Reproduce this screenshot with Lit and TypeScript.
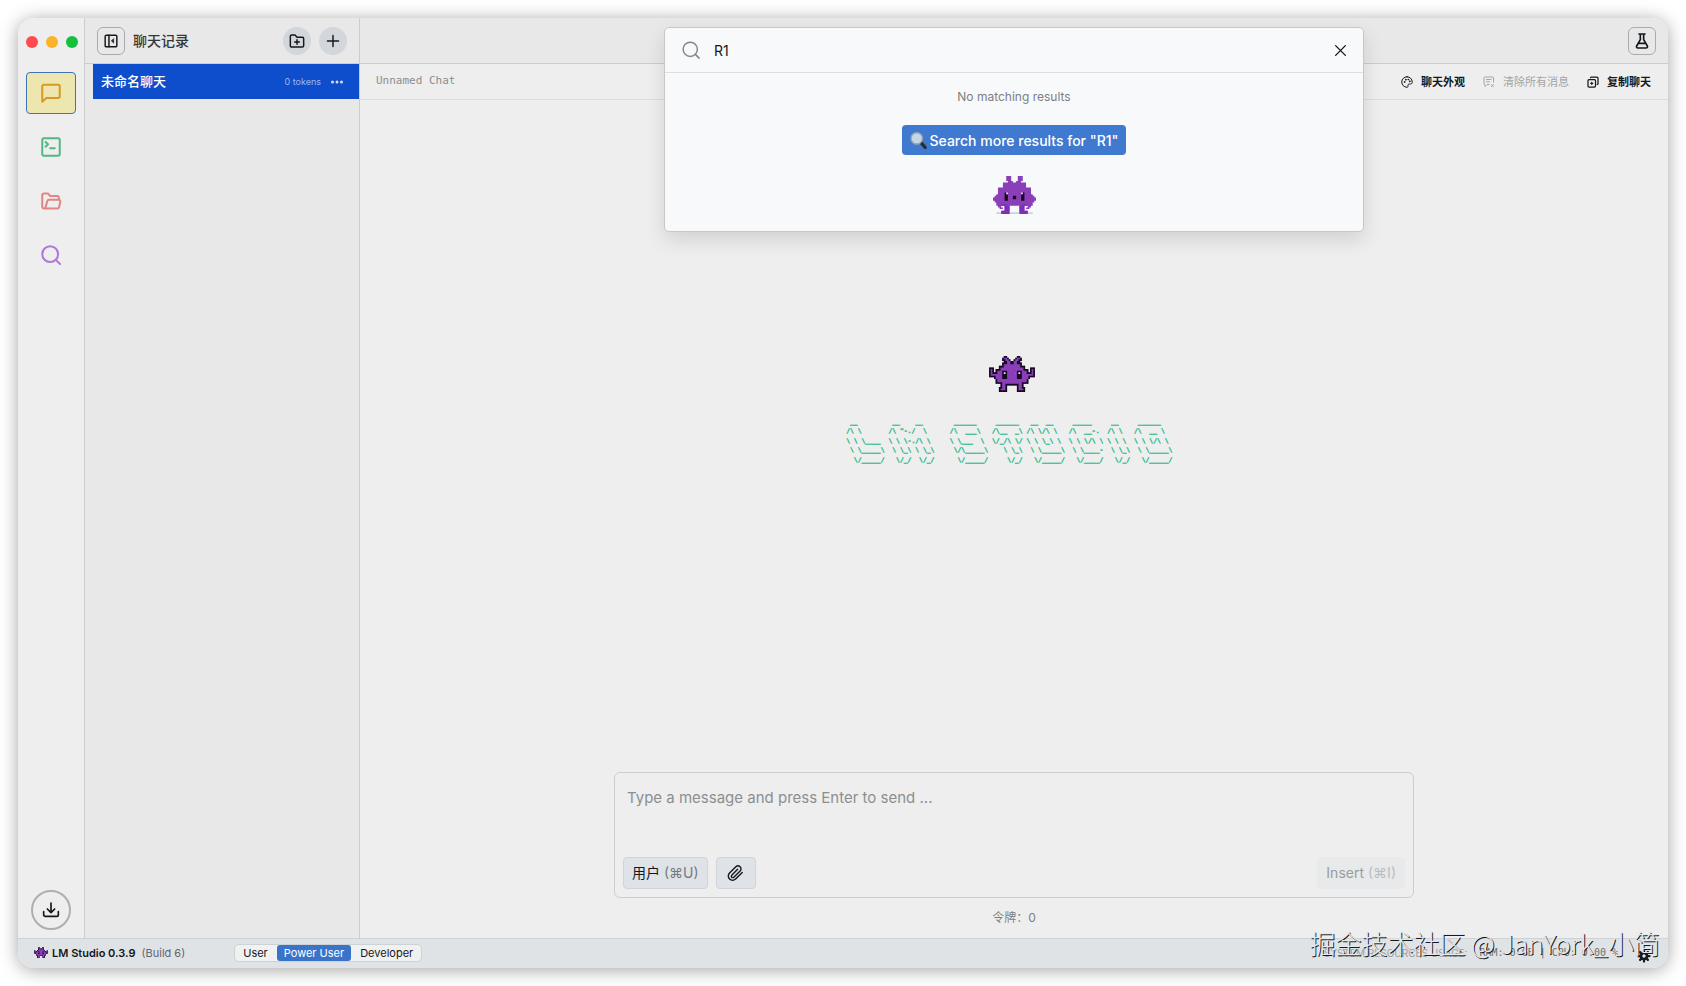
import { LitElement, html, css, svg } from "lit";
import { customElement, property, state } from "lit/decorators.js";
import { classMap } from "lit/directives/class-map.js";

const WORDMARK = [
  ' __         __    __        ______     ______   __  __     _____     __     ______',
  '/\\ \\       /\\ "-./  \\      /\\  ___\\   /\\__  _\\ /\\ \\/\\ \\   /\\  __-.  /\\ \\   /\\  __ \\',
  '\\ \\ \\____  \\ \\ \\-./\\ \\     \\ \\___  \\  \\/_/\\ \\/ \\ \\ \\_\\ \\  \\ \\ \\/\\ \\ \\ \\ \\  \\ \\ \\/\\ \\',
  ' \\ \\_____\\  \\ \\_\\ \\ \\_\\     \\/\\_____\\    \\ \\_\\  \\ \\_____\\  \\ \\____-  \\ \\_\\  \\ \\_____\\',
  '  \\/_____/   \\/_/  \\/_/      \\/_____/     \\/_/   \\/_____/   \\/____/   \\/_/   \\/_____/',
];

// Left halves of the sprites; each row is mirrored when drawn.
const OUTLINED = [
  ".........##...",
  "........#pp#..",
  "........##pp#.",
  ".........##pp#",
  "........###pp#",
  "........#ppppp",
  "......###ppppp",
  "###...#ppppppp",
  "#p#.###ppppppp",
  "#p#.#ppp###ppp",
  "#p###ppp#w#ppp",
  "#ppppppp###ppp",
  "####pppp###ppp",
  "...#pppp###ppp",
  "....#ppppppppp",
  "....#ppppppppp",
  "....####pppppp",
  ".......#pp####",
  ".......#pp#...",
  "......##pp#...",
  "......#ppp#...",
  "......#####...",
];

const PLAIN = [
  "........ppp..",
  "........ppp..",
  "........ppp..",
  ".........ppp.",
  "......ppppppp",
  "......ppppppp",
  "......ppppppp",
  "...pppppppppp",
  "...pppppppppp",
  "...pppppppppp",
  "...pppp#wpppp",
  "..ppppp##pppp",
  ".pppppp##ppp#",
  "ppppppp##ppp#",
  "ppppppp##pppp",
  ".pppppppppppp",
  "..ppppppppppp",
  "..pppqqqppppp",
  "...pp..qqq...",
  "....pp.qqq...",
  ".......qqq...",
  ".....qqqqq...",
  "..sssqqqqqsss",
];

const PALETTE: Record<string, string> = {
  "#": "#160a22",
  p: "#8a3fb8",
  q: "#7a2fb4",
  w: "#e9dcf5",
  s: "#cdd2da",
};

@customElement("pixel-mascot")
class PixelMascot extends LitElement {
  @property() variant: "outlined" | "plain" = "outlined";
  static styles = css`
    :host { display: block; }
    svg { display: block; width: 100%; height: 100%; }
  `;
  render() {
    const half = this.variant === "plain" ? PLAIN : OUTLINED;
    const rows = half.map((r) => r + [...r].reverse().join(""));
    // One path per colour, so that neighbouring cells leave no seam.
    const cells = (key: string) =>
      rows.map((row, y) => [...row].map((c, x) => (c === key ? `M${x} ${y}h1v1h-1z` : "")).join("")).join("");
    const body = rows
      .map((row, y) => [...row].map((c, x) => ("#pqw".includes(c) ? `M${x} ${y}h1v1h-1z` : "")).join(""))
      .join("");
    return html`<svg viewBox="0 0 ${rows[0].length} ${rows.length}" aria-hidden="true">
      <path d=${body} fill=${PALETTE.p}></path>
      ${["s", "q", "#", "w"].map((k) => svg`<path d=${cells(k)} fill=${PALETTE[k]}></path>`)}
    </svg>`;
  }
}

const ICONS: Record<string, unknown> = {
  chat: svg`<path d="M22.500 16a2 2 0 0 1-2 2H6.500L1.500 22.500V4a2 2 0 0 1 2-2H20.500a2 2 0 0 1 2 2z"/>`,
  terminal: svg`<rect x="1.500" y="1.500" width="21" height="21" rx="2"/><path d="M5.500 6l3 2.800-3 2.800M11 13.500h5.500"/>`,
  folder: svg`<path d="M5 21l2.600-9a2 2 0 0 1 1.900-1.400H21.500a1.700 1.700 0 0 1 1.700 2.100l-1.500 6.700A2 2 0 0 1 19.700 21H3.500a2 2 0 0 1-2-2V5a2 2 0 0 1 2-2h4.200a2 2 0 0 1 1.700.9l.9 1.300a2 2 0 0 0 1.700.9h7.500a2 2 0 0 1 2 2v2.400"/>`,
  search: svg`<circle cx="11" cy="11" r="9.500"/><path d="M17.800 17.800L22.800 22.800"/>`,
  panel: svg`<rect x="2" y="2" width="20" height="20" rx="2"/><path d="M8.500 2v20"/><path d="M16.500 8.500v7L12.800 12z" fill="currentColor" stroke-width="1"/>`,
  folderPlus: svg`<path d="M2 5a2 2 0 0 1 2-2h5l3 3.500h8a2 2 0 0 1 2 2V19a2 2 0 0 1-2 2H4a2 2 0 0 1-2-2z"/><path d="M12 10v7M8.500 13.500h7"/>`,
  plus: svg`<path d="M12 2.500v19M2.500 12h19"/>`,
  close: svg`<path d="M3 3l18 18M21 3L3 21"/>`,
  flask: svg`<path d="M7.500 1.500h9M9.500 1.500v8.500L4 19.500a2 2 0 0 0 1.800 3h12.400a2 2 0 0 0 1.800-3L14.500 10V1.500M7 15.500h10"/>`,
  palette: svg`<path d="M12 1.500C6 1.500 1.500 6.300 1.500 12S6 22.500 12 22.500c1.800 0 2.400-1.200 2-2.700-.5-2.300.3-3.800 2.800-3.800H19c2 0 3.500-1.500 3.500-4C22.500 6.300 18 1.500 12 1.500z"/><circle cx="7" cy="12" r=".8"/><circle cx="9.500" cy="7.500" r=".8"/><circle cx="14.500" cy="7" r=".8"/><circle cx="17.500" cy="10.500" r=".8"/>`,
  clear: svg`<path d="M12 17H8l-4 4v-4a2 2 0 0 1-2-2V4a2 2 0 0 1 2-2h15a2 2 0 0 1 2 2v8M7 7h9M7 11.500h6M16.500 17l4.500 4.500M21 17l-4.500 4.500"/>`,
  copy: svg`<rect x="2" y="7" width="15" height="15" rx="2"/><path d="M7 3.500A2 2 0 0 1 8.500 2H20a2 2 0 0 1 2 2v11.500a2 2 0 0 1-1.500 1.500M9.500 12.500v4M7.500 14.500h4"/>`,
  clip: svg`<path d="M21.500 10.500l-9.400 9.400a6 6 0 0 1-8.500-8.500l8.900-8.900a4 4 0 0 1 6 6l-8.900 8.700a2 2 0 0 1-2.900-2.900l8.300-8.200"/>`,
  download: svg`<path d="M12 1.500v14M6.500 10.500l5.500 5.500 5.500-5.500M1 14.500V19a2.500 2.500 0 0 0 2.500 2.500h17a2.500 2.500 0 0 0 2.500-2.500v-4.500"/>`,
  dots: svg`<g fill="currentColor" stroke="none"><circle cx="3" cy="12" r="3"/><circle cx="12" cy="12" r="3"/><circle cx="21" cy="12" r="3"/></g>`,
  gear: svg`<circle cx="12" cy="12" r="6" stroke-width="5"/><path stroke-width="4.500" d="M12 1v4M12 19v4M1 12h4M19 12h4M4.200 4.200L7 7M17 17l2.800 2.800M4.200 19.800L7 17M17 7l2.800-2.800"/>`,
  lens: svg`<path d="M15.500 15l6 7" stroke="#2b2b2f" stroke-width="4.500"/><circle cx="9.500" cy="9" r="8" fill="#c3d6ea" stroke="#9aa3ae" stroke-width="2"/>`,
};

@customElement("ui-icon")
class UiIcon extends LitElement {
  @property() name = "";
  @property({ type: Number }) weight = 2;
  static styles = css`
    :host { display: block; flex: none; width: 16px; height: 16px; }
    svg { display: block; width: 100%; height: 100%; overflow: visible; }
  `;
  render() {
    return html`<svg viewBox="0 0 24 24" fill="none" stroke="currentColor" stroke-width=${this.weight}
      stroke-linecap="round" stroke-linejoin="round" aria-hidden="true">${ICONS[this.name]}</svg>`;
  }
}

@customElement("app-root")
class AppRoot extends LitElement {
  @state() private mode = "Power User";
  @state() private section = "chat";
  @state() private searching = true;

  static styles = css`
    :host {
      display: block;
      font-family: Inter, "Noto Sans CJK SC", sans-serif;
      font-size: 14px;
      color: #14181c;
      background: #fff;
    }
    *, *::before, *::after { box-sizing: border-box; }
    button, input, textarea { font: inherit; color: inherit; margin: 0; padding: 0; border: 0; background: none; outline: 0; }
    button { display: flex; align-items: center; justify-content: center; cursor: pointer; white-space: nowrap; }
    .desktop { display: flex; height: 100vh; padding: 18px; }
    .window {
      position: relative; flex: 1; min-width: 0; display: flex; flex-direction: column;
      border-radius: 16px; overflow: hidden; background: #eee;
    }
    .shade { flex: 1; min-width: 0; display: flex; border-radius: 16px; box-shadow: 0 2px 18px rgba(0, 0, 0, 0.36); }
    .body { flex: 1; min-height: 0; display: flex; }

    .rail { width: 67px; flex: none; display: flex; flex-direction: column; align-items: center; border-right: 1px solid #cbcccd; padding-bottom: 8px; }
    .lights { display: flex; gap: 8px; padding: 18px 0 0 2px; height: 54px; }
    .light { width: 12px; height: 12px; border-radius: 50%; }
    .red { background: #ff4b50; } .amber { background: #fdb22b; } .green { background: #16bf3e; }
    .nav { display: flex; flex-direction: column; gap: 12px; flex: 1; }
    .nav button { width: 50px; height: 42px; border: 1px solid transparent; border-radius: 4px; }
    .nav button.active { background: #ede6ae; border-color: #3f73b8; }
    .nav ui-icon { width: 20px; height: 20px; }
    .c-chat { color: #d69a25; } .c-terminal { color: #52b883; } .c-folder { color: #e38486; } .c-search { color: #ae76dc; }
    .download { width: 40px; height: 40px; border: 2px solid #adaeaf; border-radius: 50%; }
    .download ui-icon { width: 16px; height: 16px; }

    .sidebar { width: 275px; flex: none; background: #e8e8e8; border-right: 1px solid #cbcccd; }
    .head { height: 46px; display: flex; align-items: center; border-bottom: 1px solid #cbcccd; background: #e8e8e8; }
    .sidebar .head { padding: 0 12px; gap: 8px; }
    .square { width: 28px; height: 28px; border: 1px solid #a9abad; border-radius: 6px; flex: none; }
    .square ui-icon { width: 14px; height: 14px; }
    .title { flex: 1; margin: 0; font-size: 14px; line-height: 20px; font-weight: 500; color: #33373b; }
    .round { width: 28px; height: 28px; border-radius: 50%; background: #d3d6da; flex: none; }
    .round ui-icon { width: 16px; height: 16px; }
    .round.add ui-icon { width: 14px; height: 14px; }
    .chat { height: 35px; margin-left: 8px; padding: 0 16px 0 8px; display: flex; align-items: center; gap: 10px; background: #0e4dcc; color: #fff; }
    .name { flex: 1; font-size: 13px; line-height: 20px; font-weight: 500; padding-bottom: 2px; }
    .tokens { font-size: 9px; line-height: 12px; color: #9fb8ec; }
    .chat ui-icon { width: 12px; height: 12px; color: #d5e0f7; }

    .main { flex: 1; min-width: 0; display: flex; flex-direction: column; }
    .main .head { justify-content: flex-end; padding: 0 12px; }
    .main .head ui-icon { width: 16px; height: 16px; }
    .bar { height: 36px; flex: none; display: flex; align-items: center; justify-content: space-between; padding: 0 17px 0 16px; border-bottom: 1px solid #dcdddd; }
    .crumb { font: 11px/16px "DejaVu Sans Mono", monospace; color: #8b8d8f; padding-bottom: 2px; }
    .tools { display: flex; gap: 18px; }
    .tools button { gap: 8px; font-size: 11px; line-height: 16px; font-weight: 700; }
    .tools button:disabled { color: #a3a5a7; font-weight: 400; cursor: default; }
    .tools ui-icon { width: 12px; height: 12px; }

    .canvas { flex: 1; min-height: 0; display: flex; flex-direction: column; align-items: center; justify-content: center; padding-bottom: 48px; }
    .hero { width: 46px; height: 36px; margin-right: 5px; }
    .wordmark { width: 328px; height: 48px; margin-top: 29px; margin-right: 9px; overflow: visible; }
    .wordmark text { font: bold 10px "DejaVu Sans Mono", monospace; fill: #25bb8b; stroke: #25bb8b; stroke-width: 0.5; white-space: pre; }

    .composer { width: calc(100% - 40px); max-width: 800px; align-self: center; border: 1px solid #cccdce; border-radius: 6px; padding: 12px 8px 8px; }
    textarea { display: block; width: 100%; height: 72px; resize: none; padding: 0 4px; font-size: 15px; line-height: 26px; }
    textarea::placeholder { color: #8b8e91; opacity: 1; }
    .actions { display: flex; gap: 8px; }
    .actions button { height: 32px; padding: 0 8px; gap: 4px; background: #dfe3e7; border: 1px solid #d0d4d8; border-radius: 4px; font-size: 14px; line-height: 20px; }
    .actions .attach { width: 40px; }
    .actions .attach ui-icon { width: 17px; height: 17px; }
    .actions .insert { margin-left: auto; background: #e7e9eb; border-color: #e7e9eb; color: #9a9c9e; cursor: default; }
    .key { color: #75797e; }
    .insert .key { color: #babdbf; }
    .count { text-align: center; font-size: 12px; line-height: 18px; color: #7c7f82; padding: 11px 0; }

    .status { height: 30px; flex: none; display: flex; align-items: center; padding: 0 18px 2px 16px; background: #dfe3e6; border-top: 1px solid #cfd2d4; font-size: 11px; line-height: 16px; }
    .status pixel-mascot { width: 14px; height: 11px; margin-right: 4px; }
    .app { font-weight: 600; }
    .build { color: #62666a; margin-left: 6px; }
    .modes { display: flex; margin-left: 49px; border: 1px solid #cfd2d4; border-radius: 5px; background: #f0f1f1; }
    .modes button { height: 16px; padding: 0 7px; border-radius: 3px; font-size: 11px; line-height: 16px; margin: 0 1px; }
    .modes button.active { background: #3a74c9; color: #fff; }
    .usage { margin-left: auto; display: flex; gap: 12px; font: 10px/16px "DejaVu Sans Mono", monospace; color: #6b6f73; white-space: pre; }
    .caption { font-family: Inter, sans-serif; color: #9a9ea2; }
    .settings { margin-left: 20px; padding-top: 6px; }
    .settings ui-icon { width: 12px; height: 12px; }

    .palette {
      position: absolute; top: 9px; left: 342px; right: 0; margin: 0 auto; width: 700px; max-width: 60%;
      background: #f7f9fb; border: 1px solid #c5c7c9; border-radius: 5px;
      box-shadow: 0 8px 20px rgba(0, 0, 0, 0.12);
    }
    .query { display: flex; align-items: center; height: 45px; padding: 0 16px 0 17px; gap: 14px; border-bottom: 1px solid #dcdfe1; }
    .query ui-icon { width: 18px; height: 18px; color: #83878b; }
    .query input { flex: 1; min-width: 0; font-size: 14px; line-height: 20px; padding-top: 2px; }
    .query button ui-icon { width: 13px; height: 13px; color: #14181c; }
    .results { display: flex; flex-direction: column; align-items: center; padding: 15px 0 16px; }
    .empty { margin: 0; font-size: 12px; line-height: 18px; color: #7d8083; }
    .more { height: 30px; margin: 19px 0 20px; padding: 0 8px; gap: 3px; border-radius: 4px; background: #3f7ad0; color: #fff; font-weight: 500; }
    .more ui-icon { width: 17px; height: 17px; }
    .results pixel-mascot { width: 43px; height: 40px; }

    .credit {
      position: absolute; right: 8px; bottom: 7px; font-size: 26px; line-height: 36px; white-space: nowrap; pointer-events: none;
      font-family: "Noto Sans CJK SC", sans-serif; font-weight: 300;
      color: #e6e8ea; text-shadow: 1px 1px 0 #17191b;
    }
  `;

  private navItems = [
    ["chat", "聊天"],
    ["terminal", "Developer"],
    ["folder", "My Models"],
    ["search", "Discover"],
  ];

  render() {
    return html`<div class="desktop"><div class="shade"><div class="window">
      <div class="body">
        <aside class="rail">
          <div class="lights"><span class="light red"></span><span class="light amber"></span><span class="light green"></span></div>
          <nav class="nav">
            ${this.navItems.map(([id, label]) => html`
              <button class=${classMap({ active: this.section === id, ["c-" + id]: true })} aria-label=${label}
                @click=${() => (this.section = id)}><ui-icon name=${id} weight="2.4"></ui-icon></button>`)}
          </nav>
          <button class="download" aria-label="Downloads"><ui-icon name="download" weight="2.5"></ui-icon></button>
        </aside>

        <section class="sidebar">
          <header class="head">
            <button class="square" aria-label="Toggle sidebar"><ui-icon name="panel" weight="2.5"></ui-icon></button>
            <h1 class="title">聊天记录</h1>
            <button class="round" aria-label="New folder"><ui-icon name="folderPlus" weight="2.2"></ui-icon></button>
            <button class="round add" aria-label="New chat"><ui-icon name="plus" weight="2.5"></ui-icon></button>
          </header>
          <div class="chat">
            <span class="name">未命名聊天</span>
            <span class="tokens">0 tokens</span>
            <button aria-label="More"><ui-icon name="dots"></ui-icon></button>
          </div>
        </section>

        <main class="main">
          <header class="head">
            <button class="square" aria-label="Experiments"><ui-icon name="flask" weight="2.5"></ui-icon></button>
          </header>
          <div class="bar">
            <span class="crumb">Unnamed Chat</span>
            <div class="tools">
              <button><ui-icon name="palette"></ui-icon>聊天外观</button>
              <button disabled><ui-icon name="clear"></ui-icon>清除所有消息</button>
              <button><ui-icon name="copy" weight="2.5"></ui-icon>复制聊天</button>
            </div>
          </div>
          <div class="canvas">
            <pixel-mascot class="hero"></pixel-mascot>
            <svg class="wordmark" viewBox="0 0 512 75" role="img" aria-label="LM Studio">
              ${WORDMARK.map((line, i) => svg`<text x="0" y=${4 + i * 15} xml:space="preserve">${line}</text>`)}
            </svg>
          </div>
          <div class="composer">
            <textarea aria-label="Message" placeholder="Type a message and press Enter to send ..."></textarea>
            <div class="actions">
              <button>用户 <span class="key">(⌘U)</span></button>
              <button class="attach" aria-label="Attach file"><ui-icon name="clip"></ui-icon></button>
              <button class="insert" disabled>Insert <span class="key">(⌘I)</span></button>
            </div>
          </div>
          <div class="count">令牌：0</div>
        </main>
      </div>

      <footer class="status">
        <pixel-mascot></pixel-mascot>
        <span class="app">LM Studio 0.3.9</span><span class="build">(Build 6)</span>
        <div class="modes">
          ${["User", "Power User", "Developer"].map((m) => html`
            <button class=${classMap({ active: this.mode === m })} @click=${() => (this.mode = m)}>${m}</button>`)}
        </div>
        <div class="usage"><span class="caption">SYSTEM RESOURCES USAGE:</span><span>RAM: 0 GB | CPU: 0.00 %</span></div>
        <button class="settings" aria-label="Settings"><ui-icon name="gear"></ui-icon></button>
      </footer>

      ${this.searching ? html`
        <div class="palette" role="dialog" aria-label="Search models">
          <div class="query">
            <ui-icon name="search"></ui-icon>
            <input type="text" aria-label="Search" .value=${"R1"} />
            <button aria-label="Close" @click=${() => (this.searching = false)}><ui-icon name="close" weight="2.5"></ui-icon></button>
          </div>
          <div class="results">
            <p class="empty">No matching results</p>
            <button class="more"><ui-icon name="lens"></ui-icon>Search more results for "R1"</button>
            <pixel-mascot variant="plain"></pixel-mascot>
          </div>
        </div>` : null}
      <div class="credit">掘金技术社区 @ JanYork_小简</div>
    </div></div></div>`;
  }
}
